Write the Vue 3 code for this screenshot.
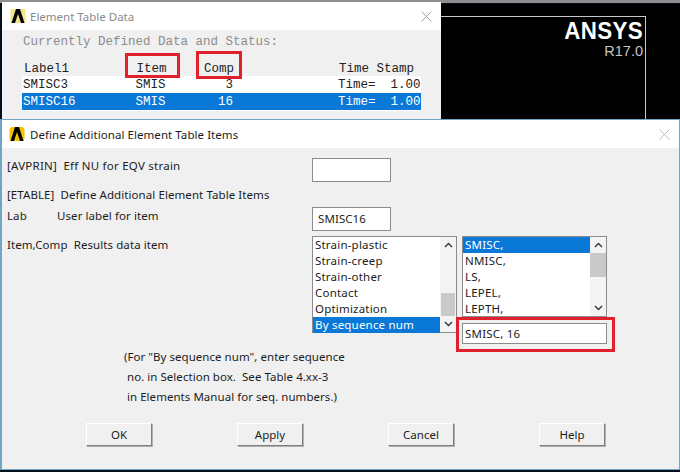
<script setup>
const backRows = [
  { text: 'SMISC3         SMIS        3              Time=  1.00', selected: false },
  { text: 'SMISC16        SMIS       16              Time=  1.00', selected: true },
]
const leftItems = ['Strain-plastic', 'Strain-creep', 'Strain-other', 'Contact', 'Optimization', 'By sequence num']
const rightItems = ['SMISC,', 'NMISC,', 'LS,', 'LEPEL,', 'LEPTH,']
const buttons = ['OK', 'Apply', 'Cancel', 'Help']
</script>

<template>
  <div class="desktop">
    <div class="topline"></div>

    <section class="graphics">
      <div class="frame">
        <div class="brand">ANSYS</div>
        <div class="release">R17.0</div>
      </div>
    </section>

    <section class="win back">
      <header class="titlebar back-title">
        <svg class="logo" viewBox="0 0 16 16"><rect x="0.5" y="1" width="15" height="14" rx="1" fill="#f6e48a"/><path d="M1.5 15 L6 1 H10 L14.5 15 H11 L8 6 L5 15 Z" fill="#000"/></svg>
        <span class="title-faded">Element Table Data</span>
        <svg class="close" viewBox="0 0 11 11"><path d="M0.5 0.5 L10.5 10.5 M10.5 0.5 L0.5 10.5" stroke="#a0a0a0" fill="none"/></svg>
      </header>
      <div class="back-body">
        <div class="mono faded heading">Currently Defined Data and Status:</div>
        <pre class="mono col-head">Label1         Item     Comp              Time Stamp</pre>
        <div class="table">
          <pre v-for="row in backRows" :key="row.text" class="mono row" :class="{ selected: row.selected }">{{ row.text }}</pre>
        </div>
      </div>
      <div class="mark mark-item"></div>
      <div class="mark mark-comp"></div>
    </section>

    <section class="win front">
      <header class="titlebar front-title">
        <svg class="logo" viewBox="0 0 16 16"><rect x="0.5" y="1" width="15" height="14" rx="3" fill="#f2c200"/><path d="M1.5 15 L6 1 H10 L14.5 15 H11 L8 6 L5 15 Z" fill="#000"/></svg>
        <span>Define Additional Element Table Items</span>
        <svg class="close" viewBox="0 0 11 11"><path d="M0.5 0.5 L10.5 10.5 M10.5 0.5 L0.5 10.5" stroke="#b8b8b8" fill="none"/></svg>
      </header>

      <div class="form">
        <div class="line avprin">
          <span class="label">[AVPRIN]&nbsp;&nbsp;Eff NU for EQV strain</span>
          <div class="field"></div>
        </div>
        <div class="etable">[ETABLE]&nbsp;&nbsp;Define Additional Element Table Items</div>
        <div class="line lab">
          <span class="label"><span class="key">Lab</span>User label for item</span>
          <div class="field">SMISC16</div>
        </div>

        <div class="line results">
          <span class="label">Item,Comp&nbsp;&nbsp;Results data item</span>
          <div class="pickers">
            <div class="listbox left">
              <ul>
                <li v-for="(item, i) in leftItems" :key="item" :class="{ selected: i === 5 }">{{ item }}</li>
              </ul>
              <div class="scroll">
                <svg class="chev" viewBox="0 0 9 6"><path d="M1 5 L4.5 1.5 L8 5" fill="none" stroke="#333" stroke-width="1.4"/></svg>
                <div class="track left-track"><div class="thumb left-thumb"></div></div>
                <svg class="chev" viewBox="0 0 9 6"><path d="M1 1 L4.5 4.5 L8 1" fill="none" stroke="#333" stroke-width="1.4"/></svg>
              </div>
            </div>
            <div class="right-col">
              <div class="listbox right">
                <ul>
                  <li v-for="(item, i) in rightItems" :key="item" :class="{ selected: i === 0 }">{{ item }}</li>
                </ul>
                <div class="scroll">
                  <svg class="chev" viewBox="0 0 9 6"><path d="M1 5 L4.5 1.5 L8 5" fill="none" stroke="#333" stroke-width="1.4"/></svg>
                  <div class="track right-track"><div class="thumb right-thumb"></div></div>
                  <svg class="chev" viewBox="0 0 9 6"><path d="M1 1 L4.5 4.5 L8 1" fill="none" stroke="#333" stroke-width="1.4"/></svg>
                </div>
              </div>
              <div class="selection">SMISC, 16</div>
            </div>
          </div>
        </div>

        <div class="note">
          <div class="note-first">(For "By sequence num", enter sequence</div>
          <div>no. in Selection box.&nbsp;&nbsp;See Table 4.xx-3</div>
          <div>in Elements Manual for seq. numbers.)</div>
        </div>

        <div class="buttons">
          <button v-for="b in buttons" :key="b" type="button">{{ b }}</button>
        </div>
      </div>
      <div class="mark mark-selection"></div>
    </section>
  </div>
</template>

<style>
html, body { margin: 0; background: #000; }
</style>

<style scoped>
.desktop {
  position: relative;
  width: 680px;
  height: 472px;
  overflow: hidden;
  background: #04101c;
  font-family: "Noto Sans", "Open Sans", sans-serif;
  font-size: 11.5px;
  color: #1c1c1c;
}
.topline { height: 3px; background: #8f8f8f; }
.graphics {
  position: absolute;
  left: 441px; top: 4px; width: 239px; height: 118px;
  background: #000;
}
.frame {
  margin-top: 12px;
  width: 205px;
  height: 110px;
  box-sizing: border-box;
  border-top: 1px solid #c8c8c8;
  border-right: 1px solid #c8c8c8;
  text-align: right;
  padding-right: 2px;
  color: #fff;
  font-family: "Liberation Sans", sans-serif;
}
.brand { font-size: 24px; font-weight: 700; line-height: 25px; margin-top: 1px; letter-spacing: 0.4px; transform: scaleX(0.93); transform-origin: right; }
.release { font-size: 14.5px; line-height: 14px; color: #c4c4c4; margin-top: 1px; }
.win { position: absolute; box-sizing: border-box; background: #f0f0f0; }
.back { left: 2px; top: 2px; width: 439px; height: 120px; }
.front {
  left: 0; top: 119px; width: 680px; height: 351px;
  border: 1px solid #6fa6c4;
  border-width: 1px 1px 1px 2px;
}
.titlebar { display: flex; align-items: center; background: #fff; position: relative; }
.back-title { height: 28px; padding-left: 8px; gap: 4px; font-size: 11.5px; }
.front-title { height: 28px; padding-left: 7px; gap: 5px; font-size: 11.5px; letter-spacing: 0.06px; }
.logo { width: 16px; height: 16px; flex: none; }
.title-faded { color: #8a8a8a; }
.close { width: 11px; height: 11px; margin-left: auto; }
.back-title .close { margin-right: 9px; }
.front-title .close { margin-right: 9px; }
.mono {
  font-family: "Liberation Mono", monospace;
  font-size: 12.5px;
  line-height: 16.5px;
  margin: 0;
  color: #222;
}
.faded { color: #8c8c8c; }
.back-body { padding: 4px 0 0 21px; }
.heading { height: 22px; }
.col-head { margin: 5px 0 0 1px; height: 15px; }
.table { width: 399px; margin-left: -1px; background: #fff; padding-bottom: 1px; }
.row { height: 17px; line-height: 18px; padding-left: 1px; }
.row.selected { background: #0a78d7; color: #fff; }
.mark { position: absolute; box-sizing: border-box; border: 3px solid #e0202a; }
.mark-item { left: 123px; top: 51px; width: 55px; height: 25px; }
.mark-comp { left: 194px; top: 49px; width: 46px; height: 28px; }
.mark-selection { left: 454px; top: 197px; width: 159px; height: 35px; }
.form { padding: 10px 0 0 5px; font-size: 11.5px; letter-spacing: 0.08px; }
.line { display: grid; grid-template-columns: 305px 1fr; }
.label { white-space: pre; }
.field {
  width: 79px;
  height: 24px;
  box-sizing: border-box;
  border: 1px solid #8c8c8c;
  background: #fff;
  padding: 0 5px;
  line-height: 22px;
}
.avprin .label { letter-spacing: 0.24px; }
.etable { margin-top: 4px; height: 18px; line-height: 18px; }
.lab { margin-top: 3px; }
.lab .label { padding-top: 1px; }
.key { display: inline-block; width: 50px; }
.results { margin-top: 5px; }
.results .label { padding-top: 1px; }
.pickers { display: flex; gap: 5px; }
.listbox {
  display: flex;
  box-sizing: border-box;
  width: 145px;
  background: #fff;
  border: 1px solid #8c8c8c;
}
.listbox.left { height: 97px; }
.listbox.right { height: 81px; }
ul { list-style: none; margin: 0; padding: 0; flex: 1; min-width: 0; }
li { height: 16px; line-height: 15px; padding-left: 2px; font-size: 11.5px; letter-spacing: 0.2px; }
li.selected { background: #0a78d7; color: #fff; }
.scroll { width: 16px; flex: none; display: flex; flex-direction: column; align-items: center; background: #f4f4f4; }
.chev { width: 9px; height: 6px; margin: 5px 0; flex: none; }
.track { flex: 1; width: 100%; position: relative; }
.thumb { position: absolute; left: 1px; right: 1px; background: #c9c9c9; }
.left-thumb { bottom: 0; height: 23px; }
.right-thumb { top: 0; height: 24px; left: 0; right: 0; }
.right-col { display: flex; flex-direction: column; gap: 6px; }
.selection {
  width: 145px;
  height: 21px;
  box-sizing: border-box;
  border: 1px solid #8c8c8c;
  background: #fff;
  padding-left: 2px;
  line-height: 19px;
  letter-spacing: 0.2px;
}
.note { margin: 3px 0 0 117px; line-height: 20px; white-space: nowrap; letter-spacing: 0.04px; }
.note > div { padding-left: 3px; }
.note > .note-first { padding-left: 0; }
.buttons { display: flex; margin: 16px 0 0 79px; gap: 85px; }
button {
  width: 66px;
  height: 23px;
  padding: 0;
  box-sizing: border-box;
  font: inherit;
  color: #1c1c1c;
  background: #f0f0f0;
  border: 1px solid;
  border-color: #fff #7f7f7f #7f7f7f #fff;
  box-shadow: 1px 1px 0 #b0b0b0;
}
</style>
